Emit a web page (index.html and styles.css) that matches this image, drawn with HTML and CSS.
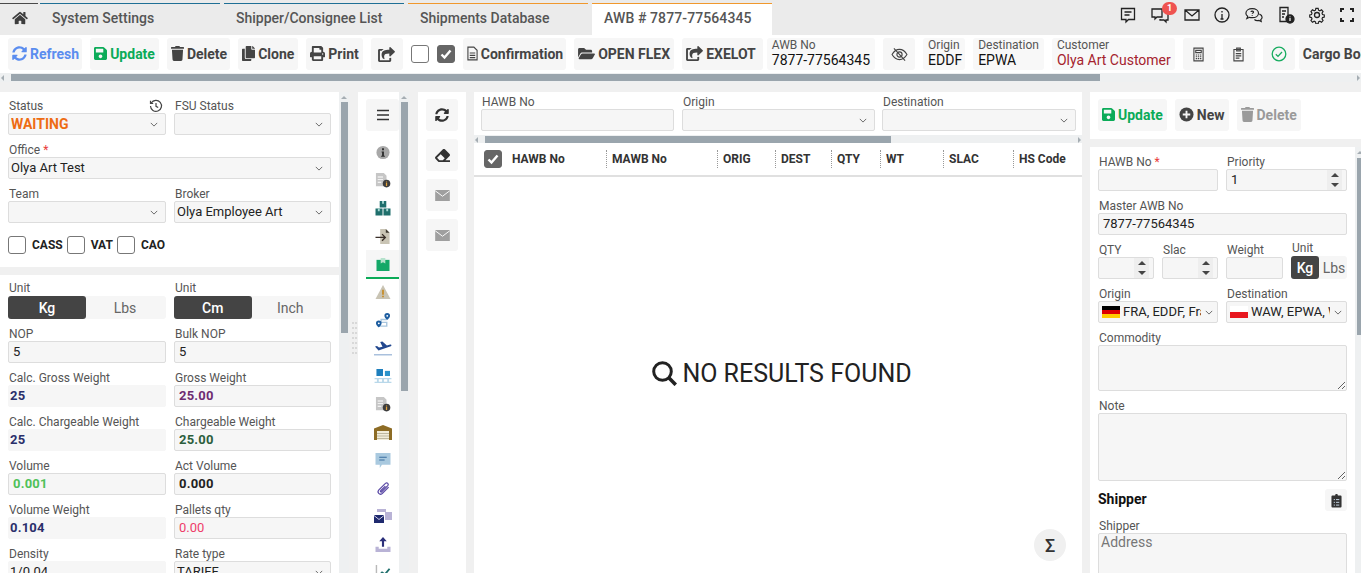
FILE: index.html
```html
<!DOCTYPE html>
<html lang="en">
<head>
<meta charset="utf-8">
<title>AWB # 7877-77564345</title>
<link rel="stylesheet" href="styles.css">
</head>
<body>
<svg class="defs" aria-hidden="true">
  <symbol id="i-home" viewBox="0 0 576 512"><path d="M280.37 148.26L96 300.11V464a16 16 0 0 0 16 16l112.06-.29a16 16 0 0 0 15.92-16V368a16 16 0 0 1 16-16h64a16 16 0 0 1 16 16v95.64a16 16 0 0 0 16 16.05L464 480a16 16 0 0 0 16-16V300L295.67 148.26a12.19 12.19 0 0 0-15.3 0zM571.6 251.47L488 182.56V44.05a12 12 0 0 0-12-12h-56a12 12 0 0 0-12 12v72.61L318.47 43a48 48 0 0 0-61 0L4.34 251.47a12 12 0 0 0-1.6 16.9l25.5 31A12 12 0 0 0 45.15 301l235.22-193.74a12.19 12.19 0 0 1 15.3 0L530.9 301a12 12 0 0 0 16.9-1.6l25.5-31a12 12 0 0 0-1.7-16.93z"/></symbol>
  <symbol id="i-sync" viewBox="0 0 512 512"><path d="M370.72 133.28C339.458 104.008 298.888 87.962 255.848 88c-77.458.068-144.328 53.178-162.791 126.85-1.344 5.363-6.122 9.15-11.651 9.15H24.103c-7.498 0-13.194-6.807-11.807-14.176C33.933 94.924 134.813 8 256 8c66.448 0 126.791 26.136 171.315 68.685L463.03 40.97C478.149 25.851 504 36.559 504 57.941V192c0 13.255-10.745 24-24 24H345.941c-21.382 0-32.09-25.851-16.971-40.971l41.75-41.749zM32 296h134.059c21.382 0 32.09 25.851 16.971 40.971l-41.75 41.75c31.262 29.273 71.835 45.319 114.876 45.28 77.418-.07 144.315-53.144 162.787-126.849 1.344-5.363 6.122-9.15 11.651-9.15h57.304c7.498 0 13.194 6.807 11.807 14.176C478.067 417.076 377.187 504 256 504c-66.448 0-126.791-26.136-171.315-68.685L48.97 471.03C33.851 486.149 8 475.441 8 454.059V320c0-13.255 10.745-24 24-24z"/></symbol>
  <symbol id="i-save" viewBox="0 0 448 512"><path d="M433.941 129.941l-83.882-83.882A48 48 0 0 0 316.118 32H48C21.49 32 0 53.49 0 80v352c0 26.51 21.49 48 48 48h352c26.51 0 48-21.49 48-48V163.882a48 48 0 0 0-14.059-33.941zM224 416c-35.346 0-64-28.654-64-64 0-35.346 28.654-64 64-64s64 28.654 64 64c0 35.346-28.654 64-64 64zm96-304.52V212c0 6.627-5.373 12-12 12H76c-6.627 0-12-5.373-12-12V108c0-6.627 5.373-12 12-12h228.52c3.183 0 6.235 1.264 8.485 3.515l3.48 3.48A11.996 11.996 0 0 1 320 111.48z"/></symbol>
  <symbol id="i-trash" viewBox="0 0 448 512"><path d="M432 32H312l-9.4-18.7A24 24 0 0 0 281.1 0H166.8a23.72 23.72 0 0 0-21.4 13.3L136 32H16A16 16 0 0 0 0 48v32a16 16 0 0 0 16 16h416a16 16 0 0 0 16-16V48a16 16 0 0 0-16-16zM53.2 467a48 48 0 0 0 47.9 45h245.8a48 48 0 0 0 47.9-45L416 128H32z"/></symbol>
  <symbol id="i-copy" viewBox="0 0 448 512"><path d="M320 448v40c0 13.255-10.745 24-24 24H24c-13.255 0-24-10.745-24-24V120c0-13.255 10.745-24 24-24h72v296c0 30.879 25.121 56 56 56h168zm0-344V0H152c-13.255 0-24 10.745-24 24v368c0 13.255 10.745 24 24 24h272c13.255 0 24-10.745 24-24V128H344c-13.2 0-24-10.8-24-24zm120.971-31.029L375.029 7.029A24 24 0 0 0 358.059 0H352v96h96v-6.059a24 24 0 0 0-7.029-16.97z"/></symbol>
  <symbol id="i-print" viewBox="0 0 512 512"><path d="M448 192V77.25c0-8.49-3.37-16.62-9.37-22.63L393.37 9.37c-6-6-14.14-9.37-22.63-9.37H96C78.33 0 64 14.33 64 32v160c-35.35 0-64 28.65-64 64v112c0 8.84 7.16 16 16 16h48v96c0 17.67 14.33 32 32 32h320c17.67 0 32-14.33 32-32v-96h48c8.84 0 16-7.16 16-16V256c0-35.35-28.65-64-64-64zm-64 256H128v-96h256v96zm0-224H128V64h192v48c0 8.84 7.16 16 16 16h48v96zm48 72c-13.25 0-24-10.75-24-24 0-13.26 10.75-24 24-24s24 10.74 24 24c0 13.25-10.75 24-24 24z"/></symbol>
  <symbol id="i-share" viewBox="0 0 576 512"><path d="M568.482 177.448L424.479 313.433C409.3 327.768 384 317.14 384 295.985v-71.963c-144.575.97-205.566 35.113-164.775 171.353 4.483 14.973-12.846 26.567-25.006 17.33C155.252 383.105 120 326.488 120 269.339c0-143.937 117.599-172.5 264-173.312V24.012c0-21.174 25.317-31.768 40.479-17.448l144.003 135.988c10.02 9.463 10.028 25.425 0 34.896zM384 379V448H64V128h51c3 0 6-1 9-4 15-15 32-28 51-37 12-6 8-23-6-23H48C21 64 0 85 0 112v352c0 27 21 48 48 48h352c27 0 48-21 48-48v-89c0-8-8-13-16-10-12 6-27 8-40 7-5-1-8 3-8 7z"/></symbol>
  <symbol id="i-folder" viewBox="0 0 576 512"><path d="M572.694 292.093L500.27 416.248A63.997 63.997 0 0 1 444.989 448H45.025c-18.523 0-30.064-20.093-20.731-36.093l72.424-124.155A64 64 0 0 1 152 256h399.964c18.523 0 30.064 20.093 20.73 36.093zM152 224h328v-48c0-26.51-21.49-48-48-48H272l-64-64H48C21.49 64 0 85.49 0 112v278.046l69.077-118.418C86.214 242.25 117.989 224 152 224z"/></symbol>
  <symbol id="i-eraser" viewBox="0 0 512 512"><path d="M497.941 273.941c18.745-18.745 18.745-49.137 0-67.882l-160-160c-18.745-18.745-49.137-18.745-67.882 0l-256 256c-18.745 18.745-18.745 49.137 0 67.882l96 96A48.004 48.004 0 0 0 144 480h356c6.627 0 12-5.373 12-12v-40c0-6.627-5.373-12-12-12H355.883l142.058-142.059zm-302.627-62.627l137.373 137.373L265.373 416H150.628l-80-80 124.686-124.686z"/></symbol>
  <symbol id="i-envelope" viewBox="0 0 16 12"><path d="M0 0h16v12h-16z" fill="#9f9f9f"/><path d="M0 .8l8 6 8-6" fill="none" stroke="#fff" stroke-width="1"/></symbol>
  <symbol id="i-chev" viewBox="0 0 10 6"><path d="M1 1l4 4 4-4" fill="none" stroke="currentColor" stroke-width="1.200"/></symbol>
  <symbol id="i-doc-info" viewBox="0 0 18 17"><path d="M1 0h9l3 3v12H1z" fill="#c6c6c6"/><path d="M3 4h6v1H3zM3 7h6v1H3zM3 10h4v1H3z" fill="#fff"/><circle cx="13" cy="12" r="4.300" fill="#3d3d3d"/><path d="M12.300 9.600h1.400v1.200h-1.400zM12.300 11.400h1.400v3.200h-1.400z" fill="#e5a33c"/></symbol>
</svg>

<div class="app">
  <nav class="tabs">
    <a class="tab tab-home"><svg class="ic-home"><use href="#i-home"/></svg></a>
    <a class="tab">System Settings</a>
    <a class="tab">Shipper/Consignee List</a>
    <a class="tab tab-orange">Shipments Database</a>
    <a class="tab tab-orange tab-active">AWB # 7877-77564345</a>
    <div class="top-icons">
      <svg class="ti" viewBox="0 0 18 18"><path d="M2.500 2.500h13v11h-6l-2.500 2.500v-2.500h-4.500z"/><path d="M5.500 6h7M5.500 9h5"/></svg>
      <span class="ti-wrap"><svg class="ti" viewBox="0 0 18 18"><path d="M1 3h10v8h-5l-2 2v-2h-3z"/><path d="M13 6h4v8h-2v2l-2-2h-4v-1"/></svg><b class="badge">1</b></span>
      <svg class="ti" viewBox="0 0 18 18"><path d="M2 4h14v10h-14zM2 4l7 6 7-6"/></svg>
      <svg class="ti ti-tight" viewBox="0 0 18 18"><circle cx="9" cy="9" r="7"/><path d="M9 8v5M9 5v1.500M7.500 13h3"/></svg>
      <svg class="ti" viewBox="0 0 20 18"><path d="M8 2c4 0 7 2 7 5s-3 5-7 5c-1 0-2 0-3-.4l-3 1.400 1-2.500c-1.500-1-2-2.200-2-3.500 0-3 3-5 7-5z"/><path d="M16 8c2 .8 3 2 3 3.500 0 1-.5 2-1.500 2.700l.5 2-2.500-1.200c-2 .5-4 0-5-1"/><path d="M6.500 5.500c.5-1.200 3-1.200 3 .2 0 1-1.500 1-1.500 2M8 9v.8"/></svg>
      <svg class="ti" viewBox="0 0 18 18"><path d="M3 1.500h8v14h-8zM5 5h4M5 8h3M5 11h2"/><circle class="ti-fill" cx="13" cy="13" r="4"/><path class="ti-i" d="M13 12v3M13 10.500v.8"/></svg>
      <svg class="ti ti-gear" viewBox="0 0 18 18"><circle cx="9" cy="9" r="2.500"/><path d="M7.700 1.500h2.600l.4 2.100 1.500.7 1.900-1.100 1.700 1.900-1.200 1.800.6 1.500 2 .5v2.500l-2 .5-.6 1.500 1.200 1.800-1.700 1.900-1.900-1.100-1.500.7-.4 2.100h-2.600l-.4-2.100-1.500-.7-1.900 1.100-1.700-1.900 1.200-1.800-.6-1.500-2-.5v-2.500l2-.5.6-1.500-1.200-1.800 1.700-1.900 1.900 1.100 1.500-.7z" transform="translate(1 1) scale(.89)"/></svg>
      <svg class="ti ti-full ti-tight" viewBox="0 0 18 18"><path d="M6 3h-3v3M12 3h3v3M6 15h-3v-3M12 15h3v-3"/></svg>
    </div>
  </nav>

  <div class="toolbar">
    <button class="btn btn-t c-blue"><svg class="ic w512"><use href="#i-sync"/></svg>Refresh</button>
    <button class="btn c-green"><svg class="ic"><use href="#i-save"/></svg>Update</button>
    <button class="btn btn-t"><svg class="ic"><use href="#i-trash"/></svg>Delete</button>
    <button class="btn"><svg class="ic"><use href="#i-copy"/></svg>Clone</button>
    <button class="btn"><svg class="ic w512"><use href="#i-print"/></svg>Print</button>
    <button class="btn btn-sq"><svg class="ic w576"><use href="#i-share"/></svg></button>
    <span class="check"></span>
    <span class="check on"><svg viewBox="0 0 14 14"><path d="M2.500 7.500l3 3 6-7" fill="none" stroke="#fff" stroke-width="2.400"/></svg></span>
    <button class="btn btn-t"><svg class="ic-line" viewBox="0 0 12 16"><path d="M1 1h6.500l3.500 3.500v10.500h-10zM3 7.500h6M3 10h6M3 12.500h6"/></svg>Confirmation</button>
    <button class="btn"><svg class="ic w576"><use href="#i-folder"/></svg>OPEN FLEX</button>
    <button class="btn btn-wide"><svg class="ic w576"><use href="#i-share"/></svg>EXELOT</button>
    <div class="info"><span class="info-l">AWB No</span><span class="info-v">7877-77564345</span></div>
    <button class="btn btn-sq"><svg class="ic-eye" viewBox="0 0 18 14"><path d="M1 7c2-3.500 5-5.500 8-5.500s6 2 8 5.500c-2 3.500-5 5.500-8 5.500s-6-2-8-5.500z"/><circle cx="9" cy="7" r="2.800"/><path d="M3 .5l12 13"/></svg></button>
    <div class="info info-n"><span class="info-l">Origin</span><span class="info-v">EDDF</span></div>
    <div class="info"><span class="info-l">Destination</span><span class="info-v">EPWA</span></div>
    <div class="info info-o"><span class="info-l">Customer</span><span class="info-v c-red">Olya Art Customer</span></div>
    <button class="btn btn-sq"><svg class="ic-line" viewBox="0 0 12 16"><path d="M1 1h10v14h-10zM3 3.500h6v2.500h-6z"/><path d="M3 8.500h1.500M5.300 8.500h1.500M7.600 8.500h1.500M3 10.500h1.500M5.300 10.500h1.500M7.600 10.500h1.500M3 12.500h1.500M5.300 12.500h1.500M7.600 12.500h1.500"/></svg></button>
    <button class="btn btn-sq"><svg class="ic-line" viewBox="0 0 12 16"><path d="M1 2.500h10v12.500h-10zM4 1h4v3h-4zM3 7h6M3 9.500h6M3 12h4"/></svg></button>
    <button class="btn btn-sq btn-last"><svg class="ic-ok" viewBox="0 0 16 16"><circle cx="8" cy="8" r="6.800"/><path d="M4.800 8.200l2.200 2.200 4-4.400"/></svg></button>
    <button class="btn btn-cut">Cargo Booking</button>
  </div>
  <div class="hbar hbar-top"><i class="arrow-l"></i><span class="thumb"></span><i class="arrow-r"></i></div>

  <main class="workspace">
    <section class="pane-left">
      <div class="block block-a">
        <div class="fields">
          <div class="field"><label class="lbl lbl-row">Status<svg class="hist" viewBox="0 0 14 14"><path d="M2.300 4a5.500 5.500 0 1 1-.8 3M1.500 1.800v2.700h2.700M7 4v3.300l2.200 1.300"/></svg></label><div class="sel"><span class="val val-status">WAITING</span><svg class="chev"><use href="#i-chev"/></svg></div></div>
          <div class="field"><label class="lbl">FSU Status</label><div class="sel"><span class="val"></span><svg class="chev"><use href="#i-chev"/></svg></div></div>
          <div class="field span2"><label class="lbl">Office <em class="req">*</em></label><div class="sel"><span class="val">Olya Art Test</span><svg class="chev"><use href="#i-chev"/></svg></div></div>
          <div class="field"><label class="lbl">Team</label><div class="sel"><span class="val"></span><svg class="chev"><use href="#i-chev"/></svg></div></div>
          <div class="field"><label class="lbl">Broker</label><div class="sel"><span class="val">Olya Employee Art</span><svg class="chev"><use href="#i-chev"/></svg></div></div>
        </div>
        <div class="checks">
          <span class="check"></span><b class="check-l">CASS</b>
          <span class="check"></span><b class="check-l">VAT</b>
          <span class="check"></span><b class="check-l">CAO</b>
        </div>
      </div>
      <div class="block block-b">
        <div class="fields">
          <div class="field"><label class="lbl">Unit</label><div class="toggle"><span class="on">Kg</span><span>Lbs</span></div></div>
          <div class="field"><label class="lbl">Unit</label><div class="toggle"><span class="on">Cm</span><span>Inch</span></div></div>
          <div class="field"><label class="lbl">NOP</label><div class="inp"><span class="val">5</span></div></div>
          <div class="field"><label class="lbl">Bulk NOP</label><div class="inp"><span class="val">5</span></div></div>
          <div class="field"><label class="lbl">Calc. Gross Weight</label><div class="inp ro"><span class="val b c-navy">25</span></div></div>
          <div class="field"><label class="lbl">Gross Weight</label><div class="inp"><span class="val b c-purple">25.00</span></div></div>
          <div class="field"><label class="lbl">Calc. Chargeable Weight</label><div class="inp ro"><span class="val b c-navy">25</span></div></div>
          <div class="field"><label class="lbl">Chargeable Weight</label><div class="inp"><span class="val b c-dgreen">25.00</span></div></div>
          <div class="field"><label class="lbl">Volume</label><div class="inp"><span class="val b c-lgreen">0.001</span></div></div>
          <div class="field"><label class="lbl">Act Volume</label><div class="inp"><span class="val b">0.000</span></div></div>
          <div class="field"><label class="lbl">Volume Weight</label><div class="inp ro"><span class="val b c-navy">0.104</span></div></div>
          <div class="field"><label class="lbl">Pallets qty</label><div class="inp"><span class="val c-pink">0.00</span></div></div>
          <div class="field"><label class="lbl">Density</label><div class="inp ro"><span class="val">1/0.04</span></div></div>
          <div class="field"><label class="lbl">Rate type</label><div class="sel"><span class="val">TARIFF</span><svg class="chev"><use href="#i-chev"/></svg></div></div>
        </div>
      </div>
    </section>
    <div class="vbar vbar-left"><i class="arrow-u"></i><span class="thumb"></span></div>
    <div class="splitter"><i></i><i></i><i></i><i></i><i></i><i></i><i></i><i></i><i></i><i></i><i></i><i></i><i></i><i></i></div>

    <aside class="rail">
      <button class="rail-top"><svg viewBox="0 0 14 12"><path d="M1 1.500h12M1 6h12M1 10.500h12" fill="none" stroke="#333" stroke-width="1.600"/></svg></button>
      <span class="rail-i"><svg viewBox="0 0 16 16"><circle cx="8" cy="8" r="7" fill="#a8a8a8"/><path d="M7 3.500h2v2h-2zM6.500 7h2.500v4.500h1v1h-4v-1h1v-3.500h-.5z" fill="#2d2d2d"/></svg></span>
      <span class="rail-i"><svg viewBox="0 0 18 17"><use href="#i-doc-info"/></svg></span>
      <span class="rail-i"><svg viewBox="0 0 18 16"><path d="M5.500 0h7v7h-7zM1 8h7.500v7.500h-7.500zM9.500 8h7.500v7.500h-7.500z" fill="#1f6f6c"/><path d="M8 0h2v3h-2zM3.500 8h2v3h-2zM12.500 8h2v3h-2z" fill="#a5d8d2"/></svg></span>
      <span class="rail-i"><svg viewBox="0 0 16 16"><path d="M5 0h6l4 4v12h-10z" fill="#c9c4b4"/><path d="M11 0l4 4h-4z" fill="#3f3a30"/><path d="M0 9h10M7 5.500l3.500 3.500-3.500 3.500" fill="none" stroke="#3a2f28" stroke-width="1.400"/></svg></span>
      <span class="rail-i rail-active"><svg viewBox="0 0 14 14"><path d="M0 2h14v12h-14z" fill="#14a868"/><path d="M4.500 0h5v6l-2.500-1.500-2.500 1.500z" fill="#b5e2cc"/></svg></span>
      <span class="rail-i"><svg viewBox="0 0 14 14"><path d="M7 0l7 13h-14z" fill="#c9c4b4"/><path d="M6.200 4.500h1.600v4.500h-1.600zM6.200 10h1.600v1.500h-1.600z" fill="#c78b22"/></svg></span>
      <span class="rail-i"><svg viewBox="0 0 16 16"><path d="M4 14h8v-4h-6v-3h6" fill="none" stroke="#a9c6de" stroke-width="1.500"/><path d="M3.500 8a3 3 0 0 1 3 3c0 2-3 4.500-3 4.500s-3-2.500-3-4.500a3 3 0 0 1 3-3zM12.500 0a3 3 0 0 1 3 3c0 2-3 4.500-3 4.500s-3-2.500-3-4.500a3 3 0 0 1 3-3z" fill="#1d5da0"/><circle cx="3.500" cy="11" r="1" fill="#fff"/><circle cx="12.500" cy="3" r="1" fill="#fff"/></svg></span>
      <span class="rail-i"><svg viewBox="0 0 18 15"><path d="M0 13h18v1.500h-18z" fill="#a9c0dd"/><path d="M1 5.500l2-.5 2 1.500 3.500-.8-2.300-4.700 2.200-.5 4.500 4 3.300-.9c1.200-.3 1.800.9.600 1.600l-12.300 4.300z" fill="#22488f"/></svg></span>
      <span class="rail-i"><svg viewBox="0 0 18 16"><path d="M2 0h7v7.500h-7z" fill="#1d7fbd"/><path d="M11 2h5.500v5.500h-5.500z" fill="#2b93cb"/><path d="M0 9.500h18v1.500h-18zM0 13.500h18v1.500h-18zM2.500 10h2v5h-2zM8 10h2v5h-2zM13.500 10h2v5h-2z" fill="#b9d8ea"/></svg></span>
      <span class="rail-i"><svg viewBox="0 0 18 17"><use href="#i-doc-info"/></svg></span>
      <span class="rail-i"><svg viewBox="0 0 18 15"><path d="M9 0l9 3.500v11.500h-18v-11.500z" fill="#8d6c25"/><path d="M3 6h12v9h-12z" fill="#f1ecd9"/><path d="M3 8.500h12M3 11h12M3 13.500h12" stroke="#bdb79e" stroke-width="1"/></svg></span>
      <span class="rail-i"><svg viewBox="0 0 14 14"><path d="M0 0h14v11h-8l-2 3v-3h-4z" fill="#a9c9df"/><path d="M3.500 3.500h7v1h-7zM3.500 6h5v1h-5z" fill="#3a6ea0"/></svg></span>
      <span class="rail-i"><svg viewBox="0 0 16 16"><path d="M14 6.500l-6.800 6.800c-2.800 2.200-6-1-3.600-3.800l7-7c1.800-1.500 4 .7 2.500 2.500l-6.500 6.500c-.8.800-1.800-.2-1.100-1.100l5-5" fill="none" stroke="#5b4aa6" stroke-width="1.300"/></svg></span>
      <span class="rail-i"><svg viewBox="0 0 18 15"><path d="M3 0h9v3h-9zM11 3h7v8h-7z" fill="#b9b3d6"/><path d="M0 6h10v8h-10z" fill="#1f2a6e"/><path d="M0 6.500l5 4 5-4" fill="none" stroke="#cfcbe6"/></svg></span>
      <span class="rail-i"><svg viewBox="0 0 14 14"><path d="M0 9h3v2h8v-2h3v5h-14z" fill="#b9b3d6"/><path d="M7 0l3.500 4h-2.500v5h-2v-5h-2.500z" fill="#2b2f7a"/></svg></span>
      <span class="rail-i"><svg viewBox="0 0 16 16"><path d="M1 0v15h15" fill="none" stroke="#b9b9b9" stroke-width="1.500"/><path d="M3 12l4-4 3 2 5-6" fill="none" stroke="#1f6f6c" stroke-width="2"/></svg></span>
    </aside>
    <div class="vbar vbar-rail"><i class="arrow-u"></i><span class="thumb"></span></div>

    <aside class="actions">
      <button class="act"><svg class="ic-sync"><use href="#i-sync"/></svg></button>
      <button class="act"><svg class="ic-act"><use href="#i-eraser"/></svg></button>
      <button class="act act-mail"><svg><use href="#i-envelope"/></svg></button>
      <button class="act act-mail"><svg><use href="#i-envelope"/></svg></button>
    </aside>

    <section class="pane-main">
      <div class="filters">
        <div class="field"><label class="lbl">HAWB No</label><div class="inp"></div></div>
        <div class="field"><label class="lbl">Origin</label><div class="sel"><span class="val"></span><svg class="chev"><use href="#i-chev"/></svg></div></div>
        <div class="field"><label class="lbl">Destination</label><div class="sel"><span class="val"></span><svg class="chev"><use href="#i-chev"/></svg></div></div>
      </div>
      <div class="hbar hbar-main"><i class="arrow-l"></i><span class="thumb"></span><i class="arrow-r"></i></div>
      <div class="thead">
        <div class="th th-first"><span class="check on"><svg viewBox="0 0 14 14"><path d="M2.500 7.500l3 3 6-7" fill="none" stroke="#fff" stroke-width="2.400"/></svg></span>HAWB No</div>
        <div class="th">MAWB No</div>
        <div class="th">ORIG</div>
        <div class="th">DEST</div>
        <div class="th">QTY</div>
        <div class="th">WT</div>
        <div class="th">SLAC</div>
        <div class="th">HS Code</div>
      </div>
      <div class="empty">
        <svg class="empty-ic" viewBox="0 0 25 25"><circle cx="10.500" cy="10.500" r="8.800"/><path d="M16.800 16.800l7 7" stroke-width="3.600"/></svg><span>NO RESULTS FOUND</span>
        <button class="sigma">Σ</button>
      </div>
    </section>

    <section class="pane-right">
      <div class="right-bar">
        <button class="btn c-green"><svg class="ic"><use href="#i-save"/></svg>Update</button>
        <button class="btn"><svg class="ic w512" viewBox="0 0 16 16"><circle cx="8" cy="8" r="7.500"/><path d="M7 4h2v3h3v2h-3v3h-2v-3h-3v-2h3z" fill="#f6f6f6"/></svg>New</button>
        <button class="btn c-gray"><svg class="ic"><use href="#i-trash"/></svg>Delete</button>
      </div>
      <div class="right-body">
        <div class="right-form">
          <div class="rgrid">
            <div class="field span2"><label class="lbl">HAWB No <em class="req">*</em></label><div class="inp"></div></div>
            <div class="field span2"><label class="lbl">Priority</label><div class="inp num"><span class="val">1</span><span class="spin"><i class="up"></i><i class="down"></i></span></div></div>
            <div class="field span4"><label class="lbl">Master AWB No</label><div class="inp"><span class="val">7877-77564345</span></div></div>
            <div class="field"><label class="lbl">QTY</label><div class="inp num"><span class="val"></span><span class="spin"><i class="up"></i><i class="down"></i></span></div></div>
            <div class="field"><label class="lbl">Slac</label><div class="inp num"><span class="val"></span><span class="spin"><i class="up"></i><i class="down"></i></span></div></div>
            <div class="field"><label class="lbl">Weight</label><div class="inp"></div></div>
            <div class="field field-unit"><label class="lbl">Unit</label><div class="toggle toggle-sm"><span class="on">Kg</span><span>Lbs</span></div></div>
            <div class="field span2"><label class="lbl">Origin</label><div class="sel"><svg class="flag" viewBox="0 0 18 12"><path d="M0 0h18v4h-18z" fill="#000"/><path d="M0 4h18v4h-18z" fill="#d00"/><path d="M0 8h18v4h-18z" fill="#fc0"/></svg><span class="val">FRA, EDDF, Frankfurt</span><svg class="chev chev-dk"><use href="#i-chev"/></svg></div></div>
            <div class="field span2"><label class="lbl">Destination</label><div class="sel"><svg class="flag" viewBox="0 0 18 12"><path d="M0 0h18v6h-18z" fill="#fff"/><path d="M0 6h18v6h-18z" fill="#e8171f"/></svg><span class="val">WAW, EPWA, Warsaw</span><svg class="chev chev-dk"><use href="#i-chev"/></svg></div></div>
            <div class="field span4"><label class="lbl">Commodity</label><textarea class="area area-s"></textarea></div>
            <div class="field span4"><label class="lbl">Note</label><textarea class="area area-m"></textarea></div>
          </div>
          <div class="shipper-head"><h3>Shipper</h3><button class="mini"><svg viewBox="0 0 12 16"><path d="M1.500 2.500h3c0-2 3-2 3 0h3c.6 0 1 .4 1 1v11c0 .6-.4 1-1 1h-9c-.6 0-1-.4-1-1v-11c0-.6.4-1 1-1z" fill="#333"/><path d="M3 7h1.300M5.500 7h3.500M3 10h1.300M5.500 10h3.500M3 13h1.300M5.500 13h3.500" stroke="#cfe0f0"/></svg></button></div>
          <div class="field"><label class="lbl">Shipper</label><textarea class="area area-l" placeholder="Address"></textarea></div>
        </div>
        <div class="vbar vbar-right"><i class="arrow-u"></i><span class="thumb"></span></div>
      </div>
    </section>
  </main>
</div>
</body>
</html>
```
FILE: styles.css
```css
* { box-sizing: border-box; }
html, body { margin: 0; height: 100%; overflow: hidden; }
body { font-family: Roboto, "Liberation Sans", sans-serif; font-size: 13px; color: #444; background: #f0f0f0; }
button { font-family: inherit; border: 0; padding: 0; cursor: pointer; }
.defs { position: absolute; width: 0; height: 0; }
.app { height: 573px; display: flex; flex-direction: column; overflow: hidden; }
.ic { width: 13px; height: 15px; fill: currentColor; flex: none; }
.w512 { width: 15px; }
.w576 { width: 17px; }

/* tabs */
.tabs { height: 35px; flex: none; display: flex; gap: 4px; background: #ebebeb; padding-top: 3px; }
.tab { width: 180px; border-top: 1px solid #1f6f95; padding-left: 12px; font-size: 14px; font-weight: 500; line-height: 28px; color: #555; }
.tab-home { width: 38px; margin-right: -2px; padding-top: 7px; border-top-color: #4a4a4a; display: flex; align-items: flex-start; }
.ic-home { width: 16px; height: 14px; fill: #3d3d3d; }
.tab-orange { border-top-color: #f0982d; }
.tab-active { background: #fff; letter-spacing: .1px; }
.top-icons { margin-left: auto; display: flex; align-items: center; gap: 14px; padding-right: 5px; height: 24px; }
.ti { width: 18px; height: 18px; fill: none; stroke: #222; stroke-width: 1.300; flex: none; }
.ti-tight { margin-left: -2px; }
.ti-gear { margin-left: -1px; }
.ti-wrap { position: relative; display: flex; }
.ti-fill { fill: #222; }
.ti-i { stroke: #f2f2f2; }
.ti-full { stroke-width: 2; }
.badge { position: absolute; left: 11px; top: -4px; width: 15px; height: 13px; border-radius: 7px; background: #ef5350; color: #fff; font-size: 9px; line-height: 13px; text-align: center; }

/* toolbar */
.toolbar { height: 38px; flex: none; display: flex; align-items: center; background: #fff; padding-left: 8px; overflow: hidden; white-space: nowrap; }
.btn { height: 32px; flex: none; display: inline-flex; align-items: center; gap: 3px; padding: 0 4px 1px; background: #f6f6f6; border-radius: 3px; font-size: 14px; font-weight: 700; color: #444; margin-right: 8px; }
.btn-t { padding-right: 3px; }
.btn-sq { width: 32px; justify-content: center; padding: 0; }
.btn-wide { padding-right: 7px; margin-right: 4px; }
.btn-last { margin-right: 4px; }
.btn-cut { margin-right: 0; }
.c-blue { color: #5b8def; }
.c-green { color: #0bab58; }
.c-gray { color: #9a9a9a; }
.c-red { color: #a5232e !important; }
.c-navy { color: #2a2f6b; }
.c-purple { color: #6e2c72; }
.c-dgreen { color: #2c5e3d; }
.c-lgreen { color: #4fc159; }
.c-pink { color: #ee3d6a; }
.b { font-weight: 700; }
.ic-line { width: 11px; height: 15px; flex: none; fill: none; stroke: currentColor; stroke-width: 1.200; }
.ic-eye { width: 17px; height: 13px; fill: none; stroke: currentColor; stroke-width: 1.200; }
.ic-ok { fill: none; stroke: #18ac60; stroke-width: 1.300; width: 16px; height: 16px; }
.check { width: 18px; height: 18px; flex: none; display: inline-block; background: #fff; border: 1px solid #777; border-radius: 3px; margin-right: 8px; }
.check.on { background: #666; border-color: #666; padding: 1px; }
.check.on svg { display: block; width: 14px; height: 14px; }
.info { height: 32px; flex: none; background: #f8f8f8; border-radius: 3px; margin-right: 8px; padding: 0 5px; display: flex; flex-direction: column; }
.info-o { padding-right: 4px; }
.info-n { padding-right: 3px; }
.info-l { font-size: 12px; line-height: 14px; color: #555; }
.info-v { font-size: 14px; line-height: 16px; color: #111; }

/* scrollbars */
.hbar { flex: none; height: 9px; background: #eef0f1; display: flex; align-items: center; position: relative; }
.hbar .thumb { display: block; height: 7px; background: #9aa5ad; }
.hbar-top { margin-bottom: 10px; }
.hbar-top .thumb { width: 1089px; margin-left: 11px; }
.hbar-main { height: 8px; }
.hbar-main .thumb { width: 406px; margin-left: 11px; }
.arrow-l, .arrow-r, .arrow-u { position: absolute; width: 0; height: 0; border: 3px solid transparent; }
.arrow-l { left: 1px; top: 2px; border-right-color: #a5adb3; border-left-width: 0; }
.arrow-r { right: 1px; top: 2px; border-left-color: #a5adb3; border-right-width: 0; }
.arrow-u { top: 4px; left: 2px; border-bottom-color: #a5adb3; border-top-width: 0; }
.vbar { flex: none; background: #eef0f1; position: relative; overflow: hidden; }
.vbar .thumb { display: block; background: #9aa5ad; width: 7px; }

/* workspace */
.workspace { flex: 1; min-height: 0; display: flex; }
.pane-left { width: 339px; flex: none; overflow: hidden; display: flex; flex-direction: column; gap: 8px; }
.block { background: #fff; padding: 7px 9px 0 8px; flex: none; }
.block-a { padding-bottom: 13px; }
.fields { display: grid; grid-template-columns: 158px 157px; column-gap: 8px; row-gap: 8px; }
.field { display: flex; flex-direction: column; min-width: 0; }
.span2 { grid-column: span 2; }
.span4 { grid-column: span 4; }
.lbl { flex: none; font-size: 12px; line-height: 14px; color: #555; padding-left: 1px; white-space: nowrap; }
.lbl-row { display: flex; justify-content: space-between; padding-right: 3px; }
.hist { width: 14px; height: 14px; fill: none; stroke: #444; stroke-width: 1.200; }
.req { color: #e83a3a; font-style: normal; }
.sel, .inp { height: 22px; flex: none; display: flex; align-items: center; gap: 2px; background: #f6f6f6; border: 1px solid #ddd; border-radius: 2px; font-size: 13px; color: #222; overflow: hidden; }
.sel { padding: 0 2px; }
.inp { padding: 0 4px; }
.inp.ro { border-color: #f6f6f6; padding: 0 1px; }
.val { flex: 1; min-width: 0; white-space: nowrap; overflow: hidden; line-height: 20px; }
.val-status { color: #ee6c13; font-size: 14px; font-weight: 700; }
.inp .val.b { letter-spacing: .2px; }
.chev { width: 8px; height: 5px; flex: none; margin-right: 5px; color: #666; }
.chev-dk { margin: 0 2px; }
.checks { display: flex; align-items: center; margin-top: 13px; height: 18px; }
.checks .check { margin-right: 0; }
.check-l { font-size: 12px; color: #222; margin: 0 4px 0 6px; }
.toggle { height: 23px; flex: none; display: flex; background: #f6f6f6; border-radius: 3px; font-size: 14px; color: #666; }
.toggle span { flex: 1; display: flex; align-items: center; justify-content: center; }
.toggle span:last-child { padding-right: 2px; }
.toggle .on { background: #444; color: #fff; font-weight: 500; border-radius: 3px; }
.toggle-sm .on { flex: none; width: 28px; }
.toggle-sm span:last-child { padding: 0 0 0 2px; }
.block-b { flex: 1; padding-top: 6px; }
.block-b .fields { grid-template-rows: 38px; grid-auto-rows: 36px; }
.block-b .toggle { margin-top: 1px; }
.vbar-left { width: 10px; padding: 10px 0 0 2px; }
.vbar-left .thumb { height: 231px; }
.splitter { width: 9px; flex: none; display: grid; grid-template-columns: 2px 2px; grid-auto-rows: 2px; gap: 3px 1px; padding: 230px 0 0 3px; align-content: start; }
.splitter i { background: #d8d8d8; }

/* rail */
.rail { width: 41px; flex: none; background: #fff; padding: 7px 0 0 8px; overflow: hidden; display: flex; flex-direction: column; align-items: center; }
.rail-top { width: 33px; height: 32px; flex: none; background: #f6f6f6; border-radius: 3px; display: flex; align-items: center; justify-content: center; margin-bottom: 7px; }
.rail-top svg { width: 14px; height: 12px; }
.rail-i { width: 33px; height: 28px; flex: none; display: flex; align-items: center; justify-content: center; }
.rail-i svg { width: 18px; height: 15px; }
.rail-active { background: #f6f6f6; border-bottom: 2px solid #0bab58; height: 29px; margin-bottom: -1px; padding-top: 1px; }
.rail-active svg { width: 14px; height: 13px; }
.vbar-rail { width: 10px; padding: 10px 0 0 2px; }
.vbar-rail .thumb { height: 289px; }

.actions { width: 48px; margin-left: 9px; flex: none; background: #fff; padding: 7px 8px 0; display: flex; flex-direction: column; gap: 8px; }
.act { width: 32px; height: 32px; background: #f6f6f6; border-radius: 3px; display: flex; align-items: center; justify-content: center; color: #333; }
.ic-act { width: 15px; height: 15px; fill: currentColor; }
.ic-sync { width: 14px; height: 14px; fill: currentColor; }
.act-mail svg { width: 15px; height: 11px; }

/* main */
.pane-main { width: 608px; flex: none; margin: 0 8px; display: flex; flex-direction: column; background: #fff; }
.filters { height: 43px; flex: none; display: grid; grid-template-columns: 193px 193px 193px; column-gap: 8px; padding: 3px 0 0 7px; }
.filters .field:last-child { margin-left: -1px; }
.thead { height: 34px; flex: none; display: grid; grid-template-columns: 132px 111px 58px 56px 49px 63px 70px 69px; align-items: center; border-bottom: 2px solid #e0e0e0; font-size: 12px; font-weight: 700; color: #333; }
.th { height: 18px; line-height: 18px; padding-left: 5px; border-left: 1px dotted #999; white-space: nowrap; }
.th-first { border-left: 0; padding-left: 10px; display: flex; align-items: center; }
.th-first .check { margin-right: 10px; }
.empty { flex: 1; position: relative; display: flex; align-items: center; justify-content: center; gap: 5px; padding: 0 0 4px 8px; font-size: 25px; color: #222; }
.empty-ic { width: 25px; height: 25px; fill: none; stroke: #222; stroke-width: 3; }
.sigma { position: absolute; left: 560px; top: 352px; width: 32px; height: 32px; border-radius: 50%; background: #f0f0f0; font-size: 18px; font-weight: 500; color: #333; }

/* right */
.pane-right { flex: 1; min-width: 0; display: flex; flex-direction: column; gap: 8px; }
.right-bar { height: 47px; flex: none; background: #fff; padding: 7px 0 0 8px; display: flex; align-items: flex-start; }
.right-body { flex: 1; min-height: 0; display: flex; overflow: hidden; }
.right-form { width: 265px; flex: none; background: #fff; padding: 8px 8px 0; }
.rgrid { display: grid; grid-template-columns: 56px 56px 57px 56px; column-gap: 8px; row-gap: 8px; width: 249px; }
.num { padding-right: 0; }
.spin { width: 15px; margin-right: 4px; height: 20px; flex: none; background: #eee; display: flex; flex-direction: column; align-items: center; justify-content: center; gap: 6px; }
.spin i { width: 0; height: 0; border-left: 4px solid transparent; border-right: 4px solid transparent; }
.spin .up { border-bottom: 4px solid #444; }
.spin .down { border-top: 4px solid #444; }
.field-unit { justify-content: flex-end; height: 36px; }
.field-unit .lbl { margin-bottom: 1px; }
.flag { width: 18px; height: 12px; margin: 0 1px; flex: none; }
.area { display: block; width: 100%; resize: vertical; background: #f6f6f6; border: 1px solid #ddd; border-radius: 2px; padding: 0 2px; font-family: inherit; font-size: 14px; margin: 0; }
.area-s { height: 46px; }
.area-m { height: 68px; }
.area-l { height: 80px; }
.area::placeholder { color: #777; }
.shipper-head { display: flex; justify-content: space-between; align-items: center; height: 22px; margin: 8px 0; }
.shipper-head h3 { margin: 0 0 2px; font-size: 14px; font-weight: 700; color: #111; }
.mini { width: 22px; height: 22px; background: #f6f6f6; border-radius: 3px; display: flex; align-items: center; justify-content: center; }
.mini svg { width: 11px; height: 15px; }
.vbar-right { flex: 1; padding: 11px 0 0 2px; }
.vbar-right .thumb { height: 177px; }
```
